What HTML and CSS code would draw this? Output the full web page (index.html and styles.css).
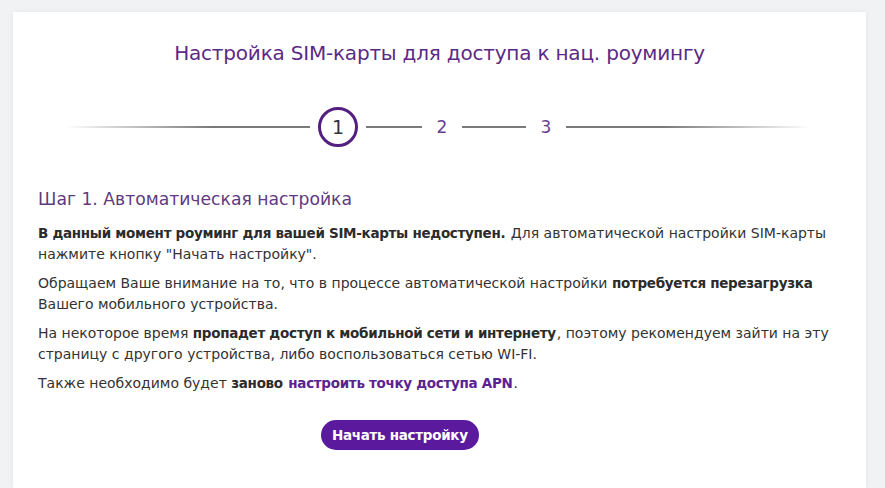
FILE: index.html
```html
<!DOCTYPE html>
<html lang="ru">
<head>
<meta charset="utf-8">
<link rel="stylesheet" href="styles.css">
</head>
<body>
<div class="page">
  <div class="card">
    <h1 class="title">Настройка SIM-карты для доступа к нац. роумингу</h1>
    <div class="stepper">
      <span class="line line-left"></span>
      <span class="step step-active">1</span>
      <span class="line line-short"></span>
      <span class="step">2</span>
      <span class="line line-short2"></span>
      <span class="step">3</span>
      <span class="line line-right"></span>
    </div>
    <h2 class="step-title">Шаг 1. Автоматическая настройка</h2>
    <p class="text"><b>В данный момент роуминг для вашей SIM-карты недоступен.</b> Для автоматической настройки SIM&#8209;карты нажмите кнопку "Начать настройку".</p>
    <p class="text">Обращаем Ваше внимание на то, что в процессе автоматической настройки <b>потребуется перезагрузка</b> Вашего мобильного устройства.</p>
    <p class="text">На некоторое время <b>пропадет доступ к мобильной сети и интернету</b>, поэтому рекомендуем зайти на эту страницу с другого устройства, либо воспользоваться сетью WI-FI.</p>
    <p class="text">Также необходимо будет <b>заново</b> <a class="link" href="#">настроить точку доступа APN</a>.</p>
    <div class="actions">
      <button class="btn">Начать настройку</button>
    </div>
  </div>
</div>
</body>
</html>
```
FILE: styles.css
```css
html, body {
  margin: 0;
  padding: 0;
  height: 100%;
  background: #f1f2f4;
  overflow: hidden;
}
.page {
  padding: 12px 19px 0 13px;
  height: 100%;
  box-sizing: border-box;
}
.card {
  background: #fff;
  height: 100%;
  box-sizing: border-box;
  padding: 28px 25px 0 25px;
  box-shadow: 0 0 6px rgba(0,0,0,0.06);
  font-family: "DejaVu Sans", sans-serif;
  color: #333;
}
.title {
  margin: 0;
  text-align: center;
  font-size: 20px;
  font-weight: normal;
  color: #5b2a86;
  line-height: 26px;
  letter-spacing: -0.2px;
}
.stepper {
  display: flex;
  align-items: center;
  margin: 41px 0 0 0;
  height: 40px;
  padding: 0 31px 0 28px;
}
.line {
  height: 2px;
  background: #7a7a7a;
}
.line-left {
  flex: 1;
  margin-right: 8px;
  background: linear-gradient(to right, rgba(122,122,122,0), #7a7a7a 60%);
}
.line-right {
  flex: 1;
  margin-left: 14px;
  background: linear-gradient(to left, rgba(122,122,122,0), #7a7a7a 60%);
}
.line-short { width: 56px; margin: 0 14px 0 8px; }
.line-short2 { width: 64px; margin: 0 14px 0 14px; }
.step {
  font-size: 17px;
  color: #6a3d92;
  width: 12px;
  text-align: center;
}
.step-active {
  width: 34px;
  height: 34px;
  border: 3px solid #54207f;
  border-radius: 50%;
  display: flex;
  align-items: center;
  justify-content: center;
  color: #333;
  font-size: 19px;
}
.step-title {
  margin: 40px 0 0 0;
  font-size: 17.2px;
  font-weight: normal;
  color: #5f3a80;
  line-height: 24px;
}
.text {
  margin: 12px 0 0 0;
  font-size: 14px;
  line-height: 21px;
}
.text + .text { margin-top: 8px; }
.text b {
  font-weight: bold;
  color: #2b2b2b;
  font-size: 13.5px;
  line-height: 20px;
  letter-spacing: -0.3px;
  padding-right: 1px;
}
.link {
  color: #5c2390;
  font-weight: bold;
  text-decoration: none;
  font-size: 13.5px;
  line-height: 20px;
  letter-spacing: -0.3px;
  padding-right: 1px;
}
.actions {
  display: flex;
  justify-content: flex-start;
  margin-top: 26px;
  padding-left: 283px;
}
.btn {
  background: #5b1a9e;
  color: #fff;
  border: none;
  border-radius: 15px;
  height: 30px;
  padding: 0 11px;
  font-family: "DejaVu Sans", sans-serif;
  font-weight: bold;
  font-size: 13.5px;
  letter-spacing: -0.3px;
}
```
